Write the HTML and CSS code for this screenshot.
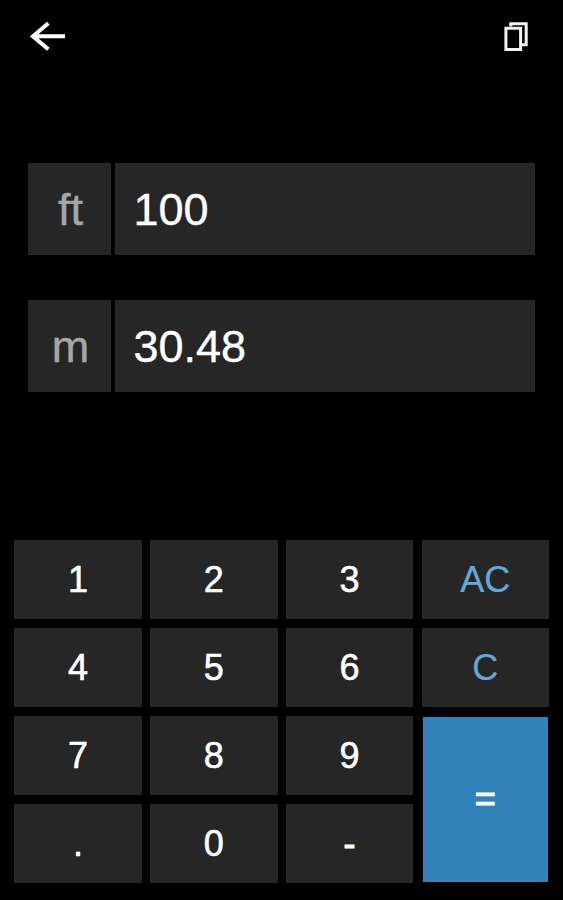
FILE: index.html
```
<!DOCTYPE html>
<html lang="en">
<head>
	<meta charset="UTF-8">
	<title>Unit converter</title>
	<link rel="stylesheet" href="styles.css">
</head>
<body>
	<div class="header">
		<svg class="icon" width="36" height="30" viewBox="0 0 36 30" fill="none" stroke="#fff" stroke-width="4">
			<path d="M35 15.3H3M18.3 2.2L3 15.3l15.3 13"/>
		</svg>
		<svg class="icon" width="24" height="30" viewBox="0 0 24 30" fill="none" stroke="#f2f2f2" stroke-width="3">
			<path d="M6.8 5.5V2.7h15.4v21.1H18"/>
			<path d="M1.9 7.3h14.7v21.2H1.9z"/>
		</svg>
	</div>

	<div class="fields">
		<div class="field">
			<div class="unit">ft</div>
			<div class="value">100</div>
		</div>
		<div class="field">
			<div class="unit">m</div>
			<div class="value">30.48</div>
		</div>
	</div>

	<div class="keys">
		<div class="key">1</div>
		<div class="key">2</div>
		<div class="key">3</div>
		<div class="key clear">AC</div>
		<div class="key">4</div>
		<div class="key">5</div>
		<div class="key">6</div>
		<div class="key clear">C</div>
		<div class="key">7</div>
		<div class="key">8</div>
		<div class="key">9</div>
		<div class="key equal">=</div>
		<div class="key">.</div>
		<div class="key">0</div>
		<div class="key sign">-</div>
	</div>
</body>
</html>
```

FILE: styles.css
```
body{display:flex;flex-direction:column;box-sizing:border-box;height:900px;margin:0;padding-bottom:17px;overflow:hidden;background-color:#000;color:#fff;font-family:"Liberation Sans",Arial,sans-serif;}
.header{display:flex;justify-content:space-between;padding:21px 35px 0 30px;}
.icon{display:block;}
.fields{display:flex;flex-direction:column;gap:45px;margin-top:111.5px;padding:0 28px 0 28.4px;font-size:45px;}
.field{display:grid;grid-template-columns:83px 1fr;gap:4px;height:92px;line-height:90px;}
.unit,.value{box-sizing:border-box;height:92px;padding-top:2px;background-color:#262626;}
.unit{color:#a6a6a6;text-align:center;text-indent:1px;-webkit-text-stroke:.5px #a6a6a6;}
.value{padding-left:18px;-webkit-text-stroke:.4px #fff;}
.keys{display:grid;grid-template-columns:repeat(4,1fr);grid-auto-rows:79px;gap:9px 8.3px;margin-top:auto;padding:0 14px 0 14.4px;font-size:36px;}
.key{display:flex;align-items:center;justify-content:center;background-color:#262626;-webkit-text-stroke:.6px #fff;}
.clear{color:#64a8da;-webkit-text-stroke:.2px #64a8da;}
.equal{grid-row:span 2;margin:1px 1.5px 1.5px;padding-bottom:1px;background-color:#3282b9;-webkit-text-stroke:1.2px #fff;}
.sign{-webkit-text-stroke:1px #fff;}
```
